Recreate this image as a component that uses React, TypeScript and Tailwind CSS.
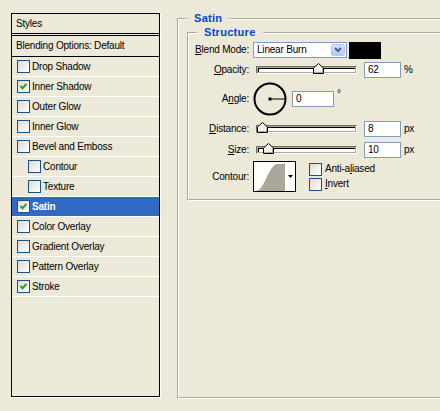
import React from 'react';

const styles = [
  { label: 'Drop Shadow', on: false },
  { label: 'Inner Shadow', on: true },
  { label: 'Outer Glow', on: false },
  { label: 'Inner Glow', on: false },
  { label: 'Bevel and Emboss', on: false },
  { label: 'Contour', on: false, indent: true },
  { label: 'Texture', on: false, indent: true },
  { label: 'Satin', on: true, selected: true },
  { label: 'Color Overlay', on: false },
  { label: 'Gradient Overlay', on: false },
  { label: 'Pattern Overlay', on: false },
  { label: 'Stroke', on: true },
];

function Check({ on }: { on?: boolean }) {
  return (
    <span className="w-[13px] h-[13px] shrink-0 border border-[#1c5180] bg-linear-to-br from-[#dcdbd5] to-white flex items-center justify-center">
      {on && (
        <svg width="9" height="9" viewBox="0 0 9 9">
          <polyline points="1.5,4 3.5,6.2 7.5,1.8" fill="none" stroke="#21a121" strokeWidth="2" />
        </svg>
      )}
    </span>
  );
}

function Thumb({ left }: { left: number }) {
  return (
    <svg className="absolute top-[1px]" style={{ left }} width="11" height="11" viewBox="0 0 11 11">
      <path d="M0.5,10.5 L0.5,5 L5.5,0.5 L10.5,5 L10.5,10.5 Z" fill="#f4f3ee" stroke="#000" />
      <path d="M1.5,9.5 L9.5,9.5 L9.5,5.5" fill="none" stroke="#aca899" />
    </svg>
  );
}

function Slider({ thumb }: { thumb: number }) {
  return (
    <div className="relative ml-[7px] w-[101px] h-[16px] flex items-center">
      <div className="w-full h-[8px] border border-t-[#716f64] border-l-[#716f64] border-b-white border-r-white bg-[#aca899] p-[1px]">
        <div className="w-full h-full bg-[#fbfbf7] border-t border-l border-black" />
      </div>
      <Thumb left={thumb} />
    </div>
  );
}

function Field({ value, w }: { value: string; w: string }) {
  return (
    <div className={`${w} h-[16px] border border-[#7f9db9] bg-white pl-[3px] flex items-center`}>
      {value}
    </div>
  );
}

function Label({ children }: { children: React.ReactNode }) {
  return <div className="w-[60px] shrink-0 text-right">{children}</div>;
}

export default function App() {
  return (
    <div className="w-[440px] h-[411px] bg-[#ece9d8] flex items-start overflow-hidden text-[10px] tracking-[-0.2px] text-black font-['Liberation_Sans',Arial,sans-serif] leading-[12px]">
      {/* style list */}
      <div className="ml-[11px] mt-[13px] w-[149px] h-[384px] shrink-0 border border-black shadow-[1px_1px_0_#fff] flex flex-col">
        <div className="h-[20px] border-b border-black pl-[4px] flex items-center">Styles</div>
        <div className="h-[1px]" />
        <div className="h-[22px] border-y border-black pl-[4px] flex items-center">Blending Options: Default</div>
        {styles.map((s) => (
          <div
            key={s.label}
            className={`h-[20px] border-b border-white flex items-center gap-[2px] ${s.indent ? 'pl-[16px]' : 'pl-[5px]'} ${
              s.selected ? 'bg-[#316ac5] text-white font-bold' : ''
            }`}
          >
            <Check on={s.on} />
            <span>{s.label}</span>
          </div>
        ))}
      </div>

      {/* Satin group */}
      <div className="relative ml-[17px] mt-[18px] w-[300px] h-[381px] shrink-0 border-t border-l border-b border-t-[#aca899] border-l-[#aca899] border-b-white">
        <span className="absolute top-[-7px] left-[9px] px-[7px] bg-[#ece9d8] text-[#0046d5] font-bold text-[11px] tracking-[0.3px]">
          Satin
        </span>
        <div className="h-full border-t border-l border-b border-t-white border-l-white border-b-[#aca899] pl-[8px] pt-[12px]">
          {/* Structure group */}
          <div className="relative w-[300px] h-[169px] border-t border-l border-b border-t-[#aca899] border-l-[#aca899] border-b-white">
            <span className="absolute top-[-7px] left-[9px] px-[7px] bg-[#ece9d8] text-[#0046d5] font-bold text-[11px] tracking-[0.3px]">
              Structure
            </span>
            <div className="h-full border-t border-l border-b border-t-white border-l-white border-b-[#aca899] pt-[8px] flex flex-col">
              {/* blend mode */}
              <div className="h-[16px] flex items-center">
                <Label>
                  <u>B</u>lend Mode:
                </Label>
                <div className="ml-[4px] w-[94px] h-[16px] border border-[#7f9db9] bg-white flex items-center">
                  <span className="flex-1 pl-[3px]">Linear Burn</span>
                  <span className="w-[14px] h-[12px] mr-[1px] rounded-[2px] border border-[#b5c8f5] bg-linear-to-b from-[#d6e2fd] to-[#b2c7f7] flex items-center justify-center">
                    <svg width="8" height="6" viewBox="0 0 8 6">
                      <polyline points="1,1 4,4 7,1" fill="none" stroke="#4d6185" strokeWidth="2" />
                    </svg>
                  </span>
                </div>
                <div className="ml-[2px] w-[32px] h-[17px] bg-black" />
              </div>

              {/* opacity */}
              <div className="mt-[4px] h-[16px] flex items-center">
                <Label>
                  <u>O</u>pacity:
                </Label>
                <Slider thumb={57} />
                <div className="ml-[7px]">
                  <Field value="62" w="w-[37px]" />
                </div>
                <span className="ml-[3px]">%</span>
              </div>

              {/* angle */}
              <div className="mt-[4px] h-[34px] flex items-center">
                <Label>
                  A<u>n</u>gle:
                </Label>
                <svg className="ml-[4px]" width="34" height="34" viewBox="0 0 34 34">
                  <circle cx="17" cy="17" r="15.5" fill="none" stroke="#000" strokeWidth="2" />
                  <line x1="17" y1="17" x2="32" y2="17" stroke="#000" strokeWidth="1" />
                  <rect x="15.5" y="15.5" width="3" height="3" fill="#000" />
                </svg>
                <div className="ml-[5px]">
                  <Field value="0" w="w-[42px]" />
                </div>
                <span className="ml-[3px] mb-[10px]">°</span>
              </div>

              {/* distance */}
              <div className="mt-[5px] h-[16px] flex items-center">
                <Label>
                  <u>D</u>istance:
                </Label>
                <Slider thumb={1} />
                <div className="ml-[7px]">
                  <Field value="8" w="w-[37px]" />
                </div>
                <span className="ml-[3px]">px</span>
              </div>

              {/* size */}
              <div className="mt-[5px] h-[16px] flex items-center">
                <Label>
                  <u>S</u>ize:
                </Label>
                <Slider thumb={7} />
                <div className="ml-[7px]">
                  <Field value="10" w="w-[37px]" />
                </div>
                <span className="ml-[3px]">px</span>
              </div>

              {/* contour */}
              <div className="mt-[3px] h-[31px] flex items-center">
                <Label>Contour:</Label>
                <div className="ml-[4px] w-[43px] h-[31px] border border-black bg-white flex">
                  <div className="w-[31px] h-full border-r border-[#aca899] border-t border-l border-t-white border-l-white">
                    <svg width="30" height="28" viewBox="0 0 30 28">
                      <path d="M1,28 C10,27 13,3 22,1 L30,1 L30,28 Z" fill="#aca899" />
                    </svg>
                  </div>
                  <div className="flex-1 flex items-center justify-center">
                    <svg width="5" height="3" viewBox="0 0 5 3">
                      <polygon points="0,0 5,0 2.5,3" fill="#000" />
                    </svg>
                  </div>
                </div>
                <div className="ml-[13px] flex flex-col gap-[2px]">
                  <div className="flex items-center gap-[3px]">
                    <Check />
                    <span>
                      Anti-a<u>l</u>iased
                    </span>
                  </div>
                  <div className="flex items-center gap-[3px]">
                    <Check />
                    <span>
                      <u>I</u>nvert
                    </span>
                  </div>
                </div>
              </div>
            </div>
          </div>
        </div>
      </div>
    </div>
  );
}
